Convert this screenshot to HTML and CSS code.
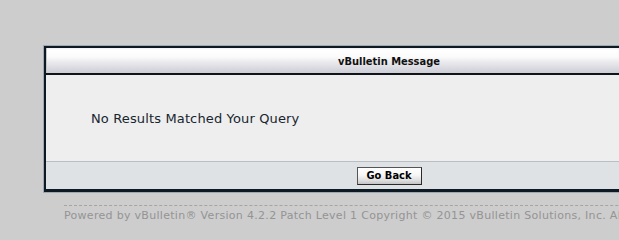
FILE: index.html
```html
<!DOCTYPE html>
<html>
<head>
<meta charset="utf-8">
<title>vBulletin Message</title>
<link rel="stylesheet" href="styles.css">
</head>
<body>
<div class="page">
  <form class="box" action="#">
    <div class="frame">
      <div class="blockhead"><h2 class="title">vBulletin Message</h2></div>
      <div class="blockbody">
        <div class="blockrow">No Results Matched Your Query</div>
      </div>
      <div class="blockfoot">
        <button type="button" class="button">Go Back</button>
      </div>
    </div>
  </form>
  <div class="copyright">Powered by vBulletin® Version 4.2.2 Patch Level 1 Copyright © 2015 vBulletin Solutions, Inc. All rights reserved.</div>
</div>
</body>
</html>
```
FILE: styles.css
```css
html, body {
  margin: 0;
  padding: 0;
  height: 223px;
  overflow: hidden;
}
body {
  background: #cdcdcd;
  font-family: "DejaVu Sans", Verdana, sans-serif;
}
.page {
  padding: 45px 0 0 43px;
  width: 692px;
}
.box {
  display: block;
  margin: 0;
  border: 1px solid #9ea8ae;
}
.frame {
  border: 2px solid #0d1a23;
  border-bottom-width: 3px;
}
.blockhead {
  height: 25px;
  border-bottom: 2px solid #101418;
  background: linear-gradient(#efefef 0, #ffffff 2px, #fbfbfb 35%, #e4e4e9 65%, #cdcdd6 100%);
  box-shadow: inset 1px 0 #c6c6c6;
  text-align: center;
}
.title {
  margin: 0;
  font-family: "DejaVu Sans Condensed", "DejaVu Sans", sans-serif;
  font-stretch: condensed;
  font-size: 11px;
  font-weight: bold;
  line-height: 27px;
  color: #111;
}
.blockbody {
  box-sizing: border-box;
  height: 87px;
  background: #eeeeee;
  border-bottom: 1px solid #b7bfc5;
}
.blockrow {
  padding: 35px 0 0 45px;
  font-size: 13px;
  letter-spacing: 0.14px;
  line-height: 18px;
  color: #17252e;
}
.blockfoot {
  height: 27px;
  background: #dfe2e4;
  display: flex;
  justify-content: center;
  align-items: center;
}
.button {
  width: 65px;
  height: 18px;
  padding: 0;
  margin: 0;
  border: 1px solid #2a2a2a;
  border-top-color: #555;
  border-left-color: #555;
  background: linear-gradient(#ffffff 0, #f6f6f6 45%, #dcdcdc 80%, #c4c4c4 100%);
  font-family: "DejaVu Sans Condensed", "DejaVu Sans", sans-serif;
  font-stretch: condensed;
  font-size: 11px;
  font-weight: bold;
  color: #000;
  line-height: 16px;
}
.copyright {
  margin: 12px 0 0 21px;
  width: 900px;
  border-top: 1px dashed #a4a4a4;
  padding-top: 3px;
  font-size: 11px;
  letter-spacing: 0.3px;
  line-height: 13px;
  color: #949494;
  white-space: nowrap;
}
```
